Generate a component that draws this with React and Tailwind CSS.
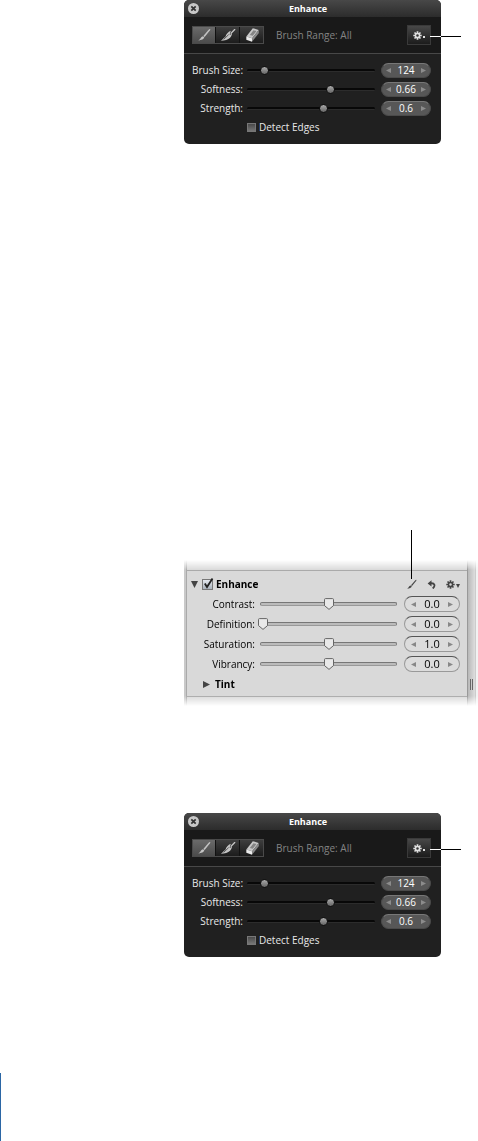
import { useState } from 'react'
import { clsx } from 'clsx'

const brushRows = [
  { label: 'Brush Size:', text: '124', position: 12 },
  { label: 'Softness:', text: '0.66', position: 66 },
  { label: 'Strength:', text: '0.6', position: 60 },
]

const adjustmentRows = [
  { label: 'Contrast:', text: '0.0', position: 50 },
  { label: 'Definition:', text: '0.0', position: 0 },
  { label: 'Saturation:', text: '1.0', position: 50 },
  { label: 'Vibrancy:', text: '0.0', position: 50 },
]

const BrushIcon = ({ className }) => (
  <svg viewBox="0 0 16 16" className={className} fill="currentColor" aria-hidden="true">
    <path d="M14.8 1.200c.7.4.4 1-.1 1.700L8.700 10.200 7.200 9l6.100-6.900c.6-.6 1-.9 1.500-.9z" />
    <path d="M6.700 9.300l1.700 1.400c-.4 1.900-3.200 3.500-7.400 3.500 1.900-.5 2.400-1.500 3-2.600.6-1.200 1.500-2 2.700-2.300z" />
  </svg>
)

const FeatherBrushIcon = ({ className }) => (
  <svg viewBox="0 0 18 16" className={className} aria-hidden="true">
    <path d="M16.700 1.800L12.500 6" stroke="currentColor" strokeWidth="1.500" strokeLinecap="round" />
    <path d="M12.500 3.200C9.500 4 7 6.800 6.200 9.700 4.500 11.200 3 13 .8 14.600c4.400 0 8.400-1.200 10.500-3.400 1.500-1.600 2.300-3.300 2.300-5.400L11 8.300c0-1.900.4-3.500 1.500-5.100z" fill="currentColor" />
    <path d="M4 13l5.800-5.500" stroke="#3a3a3a" strokeWidth=".9" />
  </svg>
)

const EraserIcon = ({ className }) => (
  <svg viewBox="0 0 18 16" className={className} aria-hidden="true">
    <path d="M9.800 1.200l5.900 1.700-6.500 8.400-5.900-1.900z" fill="#c8c8c8" />
    <path d="M3.300 9.400l5.900 1.900-.2 3.500-5.700-2z" fill="#ececec" />
    <path d="M9.200 11.300l6.500-8.400.2 3.200L9 14.800z" fill="#8a8a8a" />
    <path d="M10.500 3.200l3 .9-3.700 4.700-3-.9z" fill="#858585" />
  </svg>
)

const GearIcon = ({ className }) => (
  <svg viewBox="0 0 16 16" className={className} aria-hidden="true">
    <g stroke="currentColor" strokeWidth="3">
      <path d="M8 .5v15M.5 8h15M2.700 2.700l10.600 10.600M13.300 2.700L2.700 13.300" />
    </g>
    <circle cx="8" cy="8" r="5" fill="currentColor" />
    <circle cx="8" cy="8" r="2.200" className="fill-[var(--hole)]" />
  </svg>
)

const UndoIcon = ({ className }) => (
  <svg viewBox="0 0 12 12" className={className} aria-hidden="true">
    <path d="M.8 4.600L6 .3v8.200z" fill="currentColor" />
    <path d="M5 4.400c5.500-.6 6.500 3.600 2.600 6.900" fill="none" stroke="currentColor" strokeWidth="2.400" />
  </svg>
)

const Triangle = ({ className }) => (
  <svg viewBox="0 0 8 8" className={className} fill="currentColor" aria-hidden="true">
    <path d="M0 0l8 4-8 4z" />
  </svg>
)

const Slider = ({ id, position, dark }) => {
  const [value, setValue] = useState(position)

  return (
    <div className="relative flex h-4 min-w-0 flex-1 items-center">
      <input
        id={id}
        type="range"
        value={value}
        onChange={(e) => setValue(Number(e.target.value))}
        className={clsx(
          'w-full appearance-none rounded-full [&::-webkit-slider-thumb]:h-3 [&::-webkit-slider-thumb]:w-2 [&::-webkit-slider-thumb]:appearance-none',
          dark
            ? 'h-[3px] border-b border-[#2c2c2c] bg-[#080808]'
            : 'h-1 border border-[#777] border-b-[#999] bg-[#bbb]'
        )}
      />
      <span className="pointer-events-none absolute inset-x-[3px] inset-y-0 flex items-center">
        <span className="relative h-3 w-full">
          <span className="absolute top-0 flex h-3 w-3 -translate-x-1/2 items-center justify-center" style={{ left: `${value}%` }}>
            {dark ? (
              <span className="h-[9px] w-[9px] rounded-full border border-[#111] bg-linear-to-b from-[#aaa] to-[#666]" />
            ) : (
              <svg viewBox="0 0 12 12" className="h-3 w-3 shrink-0" aria-hidden="true">
                <path d="M2.500.600h7q1 0 1 1v6L6 11.400 1.500 7.600v-6q0-1 1-1z" fill="#e9e9e9" stroke="#666" />
              </svg>
            )}
          </span>
        </span>
      </span>
    </div>
  )
}

const Stepper = ({ label, text, dark }) => (
  <div
    className={clsx(
      'flex shrink-0 items-center justify-between rounded-full border px-1',
      dark
        ? 'h-[15px] w-[50px] border-[#4a4a4a] border-t-[#777] bg-[#575757] text-[#8c8c8c]'
        : 'h-4 w-14 border-[#999] border-t-[#555] bg-[#dcdcdc] px-1.5 text-[#888]'
    )}
  >
    <button type="button" aria-label={`Decrease ${label}`}>
      <Triangle className="h-[5px] w-[5px] rotate-180" />
    </button>
    <input
      type="text"
      aria-label={label}
      defaultValue={text}
      className={clsx(
        'w-7 min-w-0 bg-transparent text-center outline-none',
        dark ? 'text-[10px] text-white' : 'text-[11px] text-black'
      )}
    />
    <button type="button" aria-label={`Increase ${label}`}>
      <Triangle className="h-[5px] w-[5px]" />
    </button>
  </div>
)

const BrushPanel = ({ id }) => (
  <section className="relative mr-[37px]">
    <div className="overflow-hidden rounded-[5px] bg-[#202020] pb-2 text-[10px] leading-[15px] text-[#e8e8e8]">
      <header className="flex h-[17px] items-center bg-linear-to-b from-[#484848] to-[#2c2c2c] px-1">
        <button type="button" aria-label="Close" className="h-[11px] w-[11px]">
          <svg viewBox="0 0 11 11" className="h-[11px] w-[11px]" aria-hidden="true">
            <circle cx="5.500" cy="5.500" r="5.500" fill="#c8c8c8" />
            <path d="M3.300 3.300l4.400 4.400M7.700 3.300L3.300 7.700" stroke="#333" strokeWidth="1.700" />
          </svg>
        </button>
        <h2 className="flex-1 pr-5 text-center text-[9px] font-bold text-white">Enhance</h2>
      </header>

      <div className="flex h-[37px] items-center border-b border-[#484848] bg-[#191919] pr-2.5 pl-2">
        <div className="flex h-[18px] divide-x divide-[#111] border border-[#4a4a4a] text-[#c4c4c4]">
          <button type="button" aria-label="Brush" className="flex w-[23px] items-center justify-center bg-linear-to-b from-[#6a6a6a] to-[#4c4c4c]">
            <BrushIcon className="h-3.5 w-3.5" />
          </button>
          <button type="button" aria-label="Feather" className="flex w-6 items-center justify-center bg-linear-to-b from-[#3e3e3e] to-[#1c1c1c]">
            <FeatherBrushIcon className="h-3.5 w-4" />
          </button>
          <button type="button" aria-label="Eraser" className="flex w-[23px] items-center justify-center bg-linear-to-b from-[#3e3e3e] to-[#1c1c1c]">
            <EraserIcon className="h-4 w-[18px]" />
          </button>
        </div>
        <p className="flex-1 pl-3 text-[#848484]">Brush Range: All</p>
        <button type="button" aria-label="Brush actions" className="flex h-5 w-6 items-center justify-center gap-px border border-[#3a3a3a] bg-linear-to-b from-[#484848] to-[#1c1c1c] text-[#e0e0e0] [--hole:#333]">
          <GearIcon className="h-[9px] w-[9px]" />
          <span className="mt-1 h-0.5 w-0.5 bg-current" />
        </button>
      </div>

      <div className="flex flex-col gap-1 pt-[9px] pr-2.5 pb-px pl-2">
        {brushRows.map((row, i) => (
          <div key={row.label} className="flex h-[15px] items-center">
            <label htmlFor={`${id}-${i}`} className="w-[51px] text-right whitespace-nowrap">{row.label}</label>
            <div className="flex min-w-0 flex-1 pr-1.5 pl-1">
              <Slider id={`${id}-${i}`} position={row.position} dark />
            </div>
            <Stepper label={row.label} text={row.text} dark />
          </div>
        ))}
        <label className="flex h-[15px] items-center gap-[3px] pl-[55px]">
          <input type="checkbox" className="h-[9px] w-[9px] appearance-none border border-[#777] bg-linear-to-b from-[#4a4a4a] to-[#777] checked:bg-[#ccc]" />
          Detect Edges
        </label>
      </div>
    </div>
    <span className="absolute top-9 -right-5 h-px w-5 bg-black" />
    <span className="absolute top-9 right-0 h-px w-[11px] bg-white" />
  </section>
)

const AdjustmentPanel = () => (
  <section className="relative pt-[30px]">
    <div className="flex bg-[#d9d9d9] mask-[linear-gradient(to_bottom,transparent,black_10px,black_calc(100%-10px),transparent)]">
      <div className="w-[3px] border-r border-[#aaa] bg-[#c9c9c9]" />
      <div className="min-w-0 flex-1 pt-2.5 pb-[9px] text-[10px] leading-5 text-black">
        <div className="border-y border-[#aaa] pt-[3px] pr-[7px] pb-[2px] pl-1">
          <div className="flex h-5 items-center">
            <button type="button" aria-label="Collapse Enhance" className="text-[#444]">
              <Triangle className="h-[7px] w-[7px] rotate-90" />
            </button>
            <label className="ml-1 flex flex-1 items-center gap-[3px] font-bold">
              <span className="relative flex h-[11px] w-[11px]">
                <input type="checkbox" defaultChecked className="peer h-[11px] w-[11px] appearance-none border border-[#777] bg-linear-to-b from-[#e4e8ee] to-[#a9b2bc]" />
                <svg viewBox="0 0 12 12" className="pointer-events-none absolute bottom-0 left-0 hidden h-3 w-3 peer-checked:block" aria-hidden="true">
                  <path d="M2.800 5.500L5 9l5.500-8.500" fill="none" stroke="#222" strokeWidth="1.800" />
                </svg>
              </span>
              Enhance
            </label>
            <div className="flex items-center gap-2.5 text-[#444]">
              <button type="button" aria-label="Brush"><BrushIcon className="h-[11px] w-[11px]" /></button>
              <button type="button" aria-label="Reset"><UndoIcon className="h-[9px] w-[9px]" /></button>
              <button type="button" aria-label="Actions" className="flex items-center gap-px [--hole:#d9d9d9]">
                <GearIcon className="h-[9px] w-[9px]" />
                <Triangle className="mt-1 h-1 w-1 rotate-90" />
              </button>
            </div>
          </div>

          {adjustmentRows.map((row, i) => (
            <div key={row.label} className="flex h-5 items-center">
              <label htmlFor={`adjust-${i}`} className="w-16 text-right whitespace-nowrap">{row.label}</label>
              <div className="flex min-w-0 flex-1 pr-[7px] pl-[5px]">
                <Slider id={`adjust-${i}`} position={row.position} />
              </div>
              <Stepper label={row.label} text={row.text} />
            </div>
          ))}

          <button type="button" className="flex h-5 items-center gap-[5px] pl-3 font-bold">
            <Triangle className="h-[7px] w-[7px] text-[#444]" />
            Tint
          </button>
        </div>
      </div>
      <div className="flex w-2 items-end justify-center border-l border-[#999] bg-linear-to-r from-[#b8b8b8] to-[#dedede] pb-4">
        <span className="h-[11px] w-[3px] border-x border-[#666]" />
      </div>
      <div className="w-[3px] border-l border-[#ccc] bg-[#f2f2f2]" />
    </div>
    <span className="absolute top-0 right-[66px] h-[49px] w-px bg-black" />
  </section>
)

const App = () => (
  <main className="relative min-h-screen bg-white pl-[184px] font-['Open_Sans','Noto_Sans',sans-serif]">
    <BrushPanel id="first" />
    <div className="pt-[386px] pb-[107px]">
      <AdjustmentPanel />
    </div>
    <BrushPanel id="second" />
    <span className="absolute bottom-0 left-0 h-[68px] w-px bg-[#2b66a5]" />
  </main>
)

export default App
